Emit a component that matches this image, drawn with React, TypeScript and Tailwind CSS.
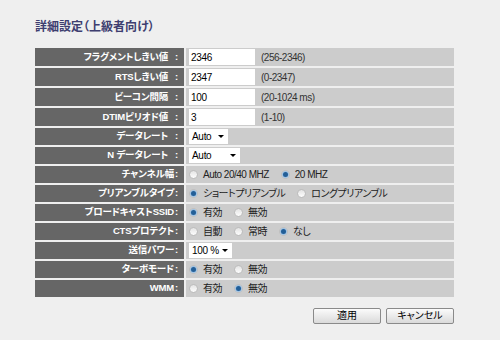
import React from 'react'

type Opt = { label: string; on?: boolean }

type Row =
  | { label: string; sp?: boolean; kind: 'input'; value: string; hint: string }
  | { label: string; sp?: boolean; kind: 'select'; value: string; w: string }
  | { label: string; sp?: boolean; kind: 'radio'; opts: Opt[] }

const rows: Row[] = [
  { label: 'フラグメントしきい値', sp: true, kind: 'input', value: '2346', hint: '(256-2346)' },
  { label: 'RTSしきい値', sp: true, kind: 'input', value: '2347', hint: '(0-2347)' },
  { label: 'ビーコン間隔', sp: true, kind: 'input', value: '100', hint: '(20-1024 ms)' },
  { label: 'DTIMピリオド値', sp: true, kind: 'input', value: '3', hint: '(1-10)' },
  { label: 'データレート', sp: true, kind: 'select', value: 'Auto', w: 'w-[39px]' },
  { label: 'N データレート', sp: true, kind: 'select', value: 'Auto', w: 'w-[51px]' },
  { label: 'チャンネル幅', kind: 'radio', opts: [{ label: 'Auto 20/40 MHZ' }, { label: '20 MHZ', on: true }] },
  { label: 'プリアンブルタイプ', kind: 'radio', opts: [{ label: 'ショートプリアンブル', on: true }, { label: 'ロングプリアンブル' }] },
  { label: 'ブロードキャストSSID', kind: 'radio', opts: [{ label: '有効', on: true }, { label: '無効' }] },
  { label: 'CTSプロテクト', kind: 'radio', opts: [{ label: '自動' }, { label: '常時' }, { label: 'なし', on: true }] },
  { label: '送信パワー', kind: 'select', value: '100 %', w: 'w-[43px]' },
  { label: 'ターボモード', kind: 'radio', opts: [{ label: '有効', on: true }, { label: '無効' }] },
  { label: 'WMM', kind: 'radio', opts: [{ label: '有効' }, { label: '無効', on: true }] },
]

function Radio({ on }: { on?: boolean }) {
  return (
    <span className="flex h-[9px] w-[9px] shrink-0 items-center justify-center rounded-full border border-[#bdbdbd] bg-gradient-to-b from-[#e4e4e4] to-[#fdfdfd]">
      {on && <span className="h-[5px] w-[5px] rounded-full bg-[#235f98] ring-1 ring-[#9cc0e2]" />}
    </span>
  )
}

function Value({ row }: { row: Row }) {
  if (row.kind === 'input') {
    return (
      <div className="flex items-center">
        <div className="flex h-[16px] w-[66px] items-center bg-white pl-[2px] text-[10px] tracking-[-0.3px] text-black">{row.value}</div>
        <span className="ml-[6px] text-[10px] tracking-[-0.5px] text-[#333]">{row.hint}</span>
      </div>
    )
  }
  if (row.kind === 'select') {
    return (
      <div className={`flex h-[15px] items-center justify-between whitespace-nowrap bg-white pl-[3px] pr-[4px] text-[10px] tracking-[-0.3px] text-black ${row.w}`}>
        <span>{row.value}</span>
        <span className="h-0 w-0 border-x-[3px] border-t-[3px] border-x-transparent border-t-black" />
      </div>
    )
  }
  return (
    <div className="flex items-center gap-[12px]">
      {row.opts.map((o) => (
        <label key={o.label} className="flex items-center gap-[5px] whitespace-nowrap text-[10px] tracking-[-0.5px] text-[#222]">
          <Radio on={o.on} />
          <span>{o.label}</span>
        </label>
      ))}
    </div>
  )
}

export default function App() {
  return (
    <div
      className="h-[340px] w-[500px] bg-[#efefef] pl-[35px] pt-[19px] [font-feature-settings:'palt']"
      style={{ fontFamily: '"Liberation Sans", "Noto Sans CJK JP", sans-serif' }}
    >
      <h1 className="text-[12px] font-semibold leading-[16px] text-[#3e3e70]">詳細設定（上級者向け）</h1>

      <div className="mt-[13px] grid w-[419px] grid-cols-[149px_1fr] gap-[2px]">
        {rows.map((r, i) => (
          <React.Fragment key={i}>
            <div
              className={`flex items-center justify-end whitespace-nowrap bg-[#666666] pr-[6px] text-[9.5px] font-bold tracking-[-0.2px] text-white ${
                r.kind === 'input' ? 'h-[18px]' : 'h-[17px]'
              }`}
            >
              <span>{r.label}</span>
              <span className={r.sp ? 'ml-[7px]' : 'ml-[1px]'}>:</span>
            </div>
            <div className="flex items-center bg-[#cccccc] pl-[3px]">
              <Value row={r} />
            </div>
          </React.Fragment>
        ))}
      </div>

      <div className="mt-[11px] flex w-[419px] justify-end gap-[5px]">
        <button className="h-[16px] w-[68px] rounded-[2px] border border-[#8a8a8a] bg-gradient-to-b from-[#fbfbfb] to-[#dadada] text-[10px] leading-none text-black">
          適用
        </button>
        <button className="h-[16px] w-[68px] rounded-[2px] border border-[#8a8a8a] bg-gradient-to-b from-[#fbfbfb] to-[#dadada] text-[10px] leading-none text-black">
          キャンセル
        </button>
      </div>
    </div>
  )
}
